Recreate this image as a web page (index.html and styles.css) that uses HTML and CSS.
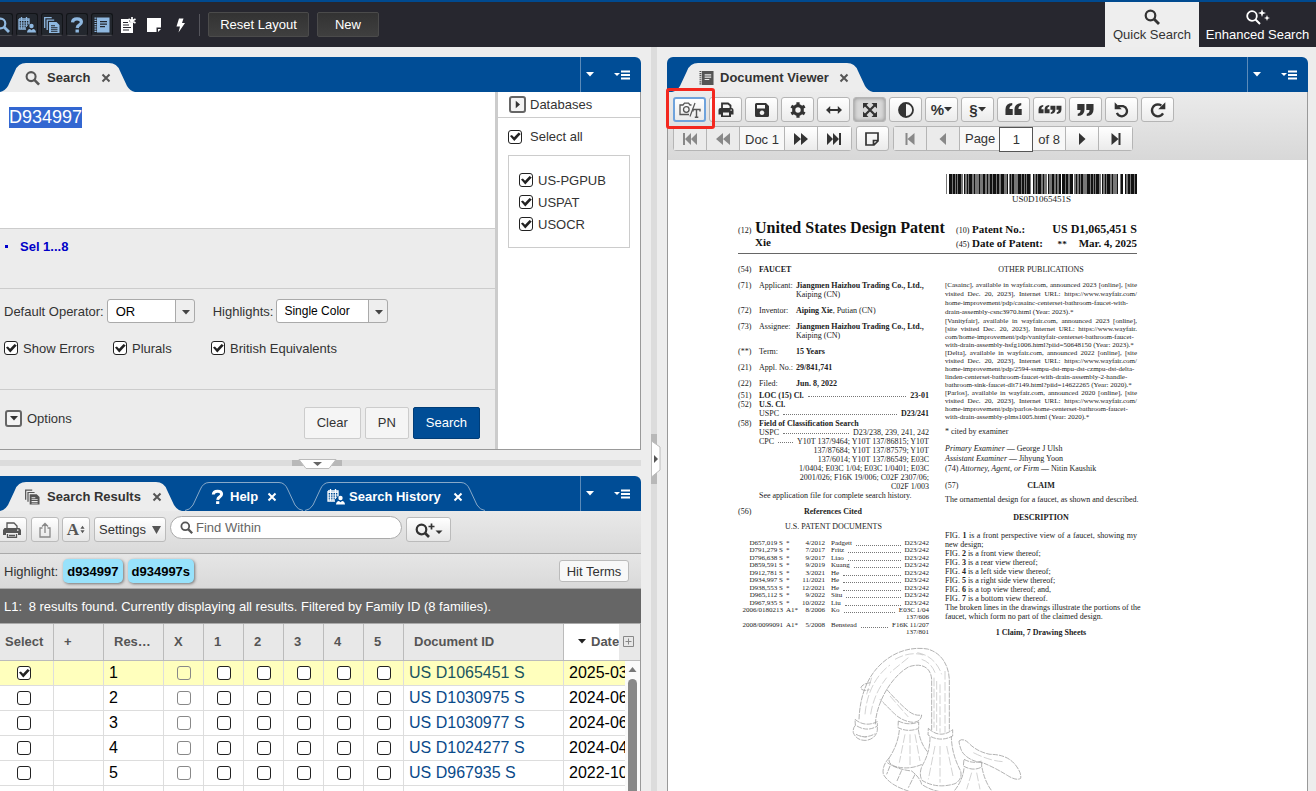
FILE: index.html
```html
<!DOCTYPE html>
<html lang="en">
<head>
<meta charset="utf-8">
<title>Patent Search</title>
<link rel="stylesheet" href="styles.css">
</head>
<body>
<svg class="defs" aria-hidden="true">
  <symbol id="i-search" viewBox="0 0 16 16"><circle cx="6.5" cy="6.5" r="4.8" fill="none" stroke="currentColor" stroke-width="2.2"/><path d="M10 10l5 5" stroke="currentColor" stroke-width="2.8"/></symbol>
  <symbol id="i-history" viewBox="0 0 18 16"><path d="M1 2h10v5.500M1 2v10h7M3.500 0v3M8.500 0v3" fill="none" stroke="currentColor" stroke-width="1.300"/><path d="M1 3.500h10M1 6h10M1 8.200h9M1 10.200h7M3.500 3v9M6 3v9M8.500 3v7" stroke="currentColor" stroke-width=".9"/><circle cx="13.500" cy="9" r="2.200" fill="currentColor"/><path d="M9 15.500q.3-3.500 3-3.500l1.500 1.200 1.500-1.200q2.700 0 3 3.500z" fill="currentColor"/></symbol>
  <symbol id="i-docs" viewBox="0 0 16 16"><path d="M.7 11V.7h7M3.200 13V3.200h7" fill="none" stroke="currentColor" stroke-width="1.300"/><path fill-rule="evenodd" d="M5 5h7.500L15.500 8v8H5zM7 8.200h4v1H7zM7 10.300h6.500v1H7zM7 12.300h6.500v1H7zM7 14.200h6.500v.8H7z" fill="currentColor"/></symbol>
  <symbol id="i-help" viewBox="0 0 16 16"><path d="M3.500 5.300Q3.700 1.800 8 1.800t4.400 3.100q0 1.800-2 2.900T8.200 11" fill="none" stroke="currentColor" stroke-width="3.200"/><path d="M6.500 12.500h3.400v3H6.500z" fill="currentColor"/></symbol>
  <symbol id="i-book" viewBox="0 0 16 16"><path d="M1.500.5v15" stroke="currentColor" stroke-width="2" stroke-dasharray="1.200 1"/><path fill-rule="evenodd" d="M3 .5h12.500v15H3zM6 4h7v1.200H6zM6 6.500h7v1.200H6zM6 9h5v1.200H6z" fill="currentColor"/></symbol>
  <symbol id="i-newnote" viewBox="0 0 16 16"><path fill-rule="evenodd" d="M1 2h8v4h4v10H1zM3 5h5v1H3zM3 7.500h6v1H3zM3 10h8v1H3zM3 12.500h6v1H3z" fill="currentColor"/><path d="M12 0v8M8.500 2l7 4M15.500 2l-7 4" stroke="currentColor" stroke-width="1.700"/></symbol>
  <symbol id="i-note" viewBox="0 0 16 16"><path d="M1 1h14v9.500h-4.500V15H1zM12 12h3l-3 3z" fill="currentColor"/></symbol>
  <symbol id="i-bolt" viewBox="0 0 16 16"><path d="M7 1.500h4.500L10 6h3L6.500 15.500 8 9.500H4.500z" fill="currentColor"/></symbol>
  <symbol id="i-enhanced" viewBox="0 0 26 16"><circle cx="7" cy="7" r="4.800" fill="none" stroke="currentColor" stroke-width="1.800"/><path d="M10.500 10.500l4.500 4.500" stroke="currentColor" stroke-width="2"/><path d="M17 0l1 3 3 1-3 1-1 3-1-3-3-1 3-1zM22 6l.8 2.200L25 9l-2.200.8L22 12l-.8-2.200L19 9l2.200-.8z" fill="currentColor"/></symbol>
  <symbol id="i-x" viewBox="0 0 10 10"><path d="M1.500 1.500l7 7M8.500 1.500l-7 7" stroke="currentColor" stroke-width="2"/></symbol>
  <symbol id="i-caret" viewBox="0 0 8 5"><path d="M0 0h8L4 4.500z" fill="currentColor"/></symbol>
  <symbol id="i-menu" viewBox="0 0 16 10"><path d="M0 3h6L3 6z" fill="currentColor"/><path d="M7 1.500h9M7 5h9M7 8.500h9" stroke="currentColor" stroke-width="2"/></symbol>
  <symbol id="i-ocr" viewBox="0 0 22 16"><path d="M10 12.500H1V3h3l1.500-1.800h4L11 3h1.500" fill="none" stroke="currentColor" stroke-width="1.300"/><circle cx="7.300" cy="7.500" r="2.800" fill="none" stroke="currentColor" stroke-width="1.300"/><path d="M16 1l-5 13.500" stroke="currentColor" stroke-width="1.200"/><path d="M14 9.500V7.500h7v2M17.500 7.500v7.500M15.800 15.200h3.500" fill="none" stroke="currentColor" stroke-width="1.400"/></symbol>
  <symbol id="i-print" viewBox="0 0 16 16"><path d="M4 6V1.500h6l2.500 2V6" fill="none" stroke="currentColor" stroke-width="1.800"/><path fill-rule="evenodd" d="M2.500 6h11q2 0 2 2v4.500h-2.500v2.500H3v-2.500H.5V8q0-2 2-2zM5 10.500v3h6v-3zM12.500 7.500v1.300h1.300V7.500z" fill="currentColor"/></symbol>
  <symbol id="i-save" viewBox="0 0 16 16"><path fill-rule="evenodd" d="M2.500 1H12l3 3v9.500q0 1.500-1.500 1.500h-11Q1 15 1 13.500v-11Q1 1 2.500 1zM3 3v3.500h8V3zM8 8.500a2.300 2.300 0 1 0 .01 0z" fill="currentColor"/></symbol>
  <symbol id="i-gear" viewBox="0 0 16 16"><circle cx="8" cy="8" r="4.300" fill="none" stroke="currentColor" stroke-width="3.200"/><path d="M8 .3v3M8 12.700v3M1.300 4.200l2.600 1.500M12.100 10.300l2.600 1.500M1.300 11.800l2.600-1.500M12.100 5.700l2.600-1.500" stroke="currentColor" stroke-width="3.200"/></symbol>
  <symbol id="i-width" viewBox="0 0 16 16"><path d="M0 8l4.200-4v3h7.600V4L16 8l-4.200 4V9H4.200v3z" fill="currentColor"/></symbol>
  <symbol id="i-expand" viewBox="0 0 16 16"><path d="M3 3l10 10M13 3L3 13" stroke="currentColor" stroke-width="2.200"/><path d="M1 1h5.500L1 6.500zM15 1v5.500L9.500 1zM1 15V9.500L6.500 15zM15 15H9.500L15 9.500z" fill="currentColor"/></symbol>
  <symbol id="i-contrast" viewBox="0 0 16 16"><circle cx="8" cy="8" r="7" fill="none" stroke="currentColor" stroke-width="1.800"/><path d="M8 1a7 7 0 0 0 0 14z" fill="currentColor"/></symbol>
  <symbol id="i-quote" viewBox="0 0 8 14"><path d="M7.500 0v2.500Q4.500 3 4.500 6.500h3.500V13H.2V7Q.2.500 7.500 0z" fill="currentColor"/></symbol>
  <symbol id="i-undo" viewBox="0 0 16 16"><path d="M4.500 4.500H9a4.600 4.600 0 1 1-5.500 6" fill="none" stroke="currentColor" stroke-width="2"/><path d="M1.500 1v6.300h6.300z" fill="currentColor"/></symbol>
  <symbol id="i-redo" viewBox="0 0 16 16"><path d="M11 4Q9.500 3 7.800 3a5.300 5.300 0 1 0 4.700 8" fill="none" stroke="currentColor" stroke-width="2"/><path d="M14.500 1v6.300H8.200z" fill="currentColor"/></symbol>
  <symbol id="i-first" viewBox="0 0 16 14"><path d="M1 1h2v12H1zM9 1v12L3 7zM15 1v12L9 7z" fill="currentColor"/></symbol>
  <symbol id="i-prev" viewBox="0 0 16 14"><path d="M8 1v12L1 7zM15 1v12L8 7z" fill="currentColor"/></symbol>
  <symbol id="i-p-first" viewBox="0 0 16 14"><path d="M3.500 1h2v12h-2zM12.500 1v12l-7-6z" fill="currentColor"/></symbol>
  <symbol id="i-p-prev" viewBox="0 0 16 14"><path d="M11 1v12L4.500 7z" fill="currentColor"/></symbol>
  <symbol id="i-sticky" viewBox="0 0 16 16"><path d="M2 2h12v8l-4 4H2zM14 9.500H9.500V14" fill="none" stroke="currentColor" stroke-width="1.700"/></symbol>
  <symbol id="i-printer" viewBox="0 0 18 16"><path fill-rule="evenodd" d="M1.500 6h15L18 8v5h-3v-2H3v2H0V8zM14 7.500v1.200h1.500V7.500z" fill="currentColor"/><path d="M4 6V1h7l3 3v2M4.500 12v3.300h9V12M6 13.500h6" fill="none" stroke="currentColor" stroke-width="1.300"/></symbol>
  <symbol id="i-share" viewBox="0 0 16 16"><path d="M5.500 6H3v9h10V6h-2.500M8 11V2M5 4.500l3-3 3 3" fill="none" stroke="currentColor" stroke-width="1.300"/></symbol>
  <symbol id="i-updown" viewBox="0 0 6 10"><path d="M3 .5L5.500 4h-5zM3 9.500L.5 6h5z" fill="currentColor"/></symbol>
  <symbol id="i-searchplus" viewBox="0 0 28 16"><circle cx="7" cy="7.500" r="4.800" fill="none" stroke="currentColor" stroke-width="2.200"/><path d="M10.500 11l4 4" stroke="currentColor" stroke-width="2.600"/><path d="M17 1.500v6M14 4.500h6" stroke="currentColor" stroke-width="1.700"/><path d="M21 8.500h7L24.500 12z" fill="currentColor"/></symbol>
</svg>

<header class="top">
  <nav class="launch" aria-label="Gadgets">
    <button class="gadget" aria-label="Search"><svg><use href="#i-search"/></svg></button>
    <button class="gadget" aria-label="Search history"><svg class="wide"><use href="#i-history"/></svg></button>
    <button class="gadget" aria-label="Search results"><svg><use href="#i-docs"/></svg></button>
    <button class="gadget" aria-label="Help"><svg><use href="#i-help"/></svg></button>
    <button class="gadget" aria-label="Document viewer"><svg><use href="#i-book"/></svg></button>
    <button class="gadget plain" aria-label="New note"><svg><use href="#i-newnote"/></svg></button>
    <button class="gadget plain" aria-label="Note"><svg><use href="#i-note"/></svg></button>
    <button class="gadget plain" aria-label="Quick action"><svg><use href="#i-bolt"/></svg></button>
    <span class="rule"></span>
    <button class="dark-btn">Reset Layout</button>
    <button class="dark-btn new">New</button>
  </nav>
  <nav class="modes" aria-label="Search mode">
    <a class="mode quick" href="#"><svg><use href="#i-search"/></svg>Quick Search</a>
    <a class="mode" href="#"><svg class="wide"><use href="#i-enhanced"/></svg>Enhanced Search</a>
  </nav>
</header>

<main class="work">
  <div class="left">
    <section class="panel">
      <div class="tabs">
        <div class="tab t-search"><svg class="shape" viewBox="0 0 135 29"><path d="M0 29Q5 28 8 23L15 8Q18 0 26 0H109Q117 0 120 8L127 23Q130 28 135 29z"/></svg><svg class="ico"><use href="#i-search"/></svg><span>Search</span><button aria-label="Close Search"><svg><use href="#i-x"/></svg></button></div>
        <div class="tab-end"><button aria-label="Tabs"><svg class="caret"><use href="#i-caret"/></svg></button><button aria-label="Menu"><svg class="menu"><use href="#i-menu"/></svg></button></div>
      </div>
      <div class="search-body">
        <form class="query">
          <textarea id="q" aria-label="Query" spellcheck="false">D934997</textarea>
          <div class="sel"><a href="#">Sel 1...8</a></div>
          <div class="opts">
            <div class="opt-row">
              <label for="op">Default Operator:</label>
              <span class="drop"><select id="op"><option>OR</option></select><svg><use href="#i-caret"/></svg></span>
              <label for="hl" class="hl-label">Highlights:</label>
              <span class="drop color"><select id="hl"><option>Single Color</option></select><svg><use href="#i-caret"/></svg></span>
            </div>
            <div class="check-row">
              <label class="c1"><input type="checkbox" checked>Show Errors</label>
              <label class="c2"><input type="checkbox" checked>Plurals</label>
              <label><input type="checkbox" checked>British Equivalents</label>
            </div>
          </div>
          <div class="actions">
            <button type="button" class="expander"><i class="box"><svg><use href="#i-caret"/></svg></i>Options</button>
            <button type="button" class="act">Clear</button>
            <button type="button" class="act">PN</button>
            <button type="button" class="act primary">Search</button>
          </div>
        </form>
        <aside class="dbs">
          <button type="button" class="db-head"><i class="box right"><svg><use href="#i-caret"/></svg></i>Databases</button>
          <label class="all"><input type="checkbox" checked>Select all</label>
          <div class="db-list">
            <label><input type="checkbox" checked>US-PGPUB</label>
            <label><input type="checkbox" checked>USPAT</label>
            <label><input type="checkbox" checked>USOCR</label>
          </div>
        </aside>
      </div>
    </section>

    <div class="hsplit"><svg viewBox="0 0 50 10"><path d="M0 1h50v6H0z" fill="#b8b8b8"/><path d="M7 .5h37l-7 9H14z" fill="#fff" stroke="#bbb"/><path d="M21 3h9l-4.500 4z" fill="#666"/></svg></div>

    <section class="panel results">
      <div class="tabs">
        <div class="tab t-results"><svg class="shape" viewBox="0 0 182 29"><path d="M0 29Q5 28 8 23L15 8Q18 0 26 0H156Q164 0 167 8L174 23Q177 28 182 29z"/></svg><svg class="ico"><use href="#i-docs"/></svg><span>Search Results</span><button aria-label="Close Search Results"><svg><use href="#i-x"/></svg></button></div>
        <div class="tab off t-help"><svg class="shape" viewBox="0 0 118 29"><path d="M0 28.500Q5 28 8 23L15 8Q18 .5 24 .5H94Q100 .5 103 8L110 23Q113 28 118 28.500"/></svg><svg class="ico"><use href="#i-help"/></svg><span>Help</span><button aria-label="Close Help"><svg><use href="#i-x"/></svg></button></div>
        <div class="tab off t-history"><svg class="shape" viewBox="0 0 180 29"><path d="M0 28.500Q5 28 8 23L15 8Q18 .5 24 .5H156Q162 .5 165 8L172 23Q175 28 180 28.500"/></svg><svg class="ico wide"><use href="#i-history"/></svg><span>Search History</span><button aria-label="Close Search History"><svg><use href="#i-x"/></svg></button></div>
        <div class="tab-end"><button aria-label="Tabs"><svg class="caret"><use href="#i-caret"/></svg></button><button aria-label="Menu"><svg class="menu"><use href="#i-menu"/></svg></button></div>
      </div>
      <div class="r-tools">
        <button class="rt" aria-label="Print"><svg class="wide"><use href="#i-printer"/></svg></button>
        <button class="rt" aria-label="Export"><svg class="faded"><use href="#i-share"/></svg></button>
        <button class="rt font" aria-label="Font size"><b>A</b><svg><use href="#i-updown"/></svg></button>
        <button class="rt settings">Settings <svg viewBox="0 0 9 8"><path d="M0 0h9L4.500 8z" fill="#555"/></svg></button>
        <label class="find"><svg><use href="#i-search"/></svg><input type="search" placeholder="Find Within" aria-label="Find Within"></label>
        <button class="rt zoom" aria-label="Search options"><svg><use href="#i-searchplus"/></svg></button>
      </div>
      <div class="r-hl"><span>Highlight:</span><button class="chip">d934997</button><button class="chip">d934997s</button><button class="hit">Hit Terms</button></div>
      <div class="r-info"><span>L1:</span> 8 results found. Currently displaying all results. Filtered by Family ID (8 families).</div>
      <div class="grid">
        <table>
          <colgroup><col class="w54"><col class="w50"><col class="w60"><col class="w40"><col class="w40"><col class="w40"><col class="w40"><col class="w40"><col class="w40"><col class="w160"><col></colgroup>
          <thead><tr><th class="first">Select</th><th>+</th><th>Res…</th><th>X</th><th>1</th><th>2</th><th>3</th><th>4</th><th>5</th><th>Document ID</th><th class="date"><svg><use href="#i-caret"/></svg>Date</th></tr></thead>
          <tbody id="rows"></tbody>
        </table>
        <button class="addcol" aria-label="Add column"><svg viewBox="0 0 12 12"><path d="M.5.500h10v10H.5zM5.500 2.500v6M2.500 5.500h6" fill="none" stroke="#888"/></svg></button>
        <div class="scroll"><svg viewBox="0 0 8 5"><path d="M0 5h8L4 0z" fill="#777"/></svg><i></i></div>
      </div>
    </section>
  </div>

  <div class="vsplit"><svg viewBox="0 0 10 50"><path d="M0 0h6v50H0z" fill="#b8b8b8"/><path d="M.5 7l8.500 6v23L.5 43z" fill="#fff" stroke="#bbb"/><path d="M3 21v8l4-4z" fill="#555"/></svg></div>

  <section class="panel viewer">
    <div class="tabs">
      <div class="tab t-doc"><svg class="shape" viewBox="0 0 201 29"><path d="M0 29Q5 28 8 23L15 8Q18 0 26 0H175Q183 0 186 8L193 23Q196 28 201 29z"/></svg><svg class="ico"><use href="#i-book"/></svg><span>Document Viewer</span><button aria-label="Close Document Viewer"><svg><use href="#i-x"/></svg></button></div>
      <div class="tab-end"><button aria-label="Tabs"><svg class="caret"><use href="#i-caret"/></svg></button><button aria-label="Menu"><svg class="menu"><use href="#i-menu"/></svg></button></div>
    </div>
    <div class="v-tools">
      <div class="bar">
        <button class="vt focus" aria-label="Image or text"><svg class="ocr"><use href="#i-ocr"/></svg><i class="mark"></i></button>
        <button class="vt" aria-label="Print"><svg><use href="#i-print"/></svg></button>
        <button class="vt" aria-label="Save"><svg><use href="#i-save"/></svg></button>
        <button class="vt" aria-label="Settings"><svg><use href="#i-gear"/></svg></button>
        <button class="vt" aria-label="Fit width"><svg><use href="#i-width"/></svg></button>
        <button class="vt pressed" aria-label="Fit page"><svg><use href="#i-expand"/></svg></button>
        <button class="vt" aria-label="Contrast"><svg><use href="#i-contrast"/></svg></button>
        <button class="vt sym">%<svg><use href="#i-caret"/></svg></button>
        <button class="vt sym">§<svg><use href="#i-caret"/></svg></button>
        <button class="vt q" aria-label="Quote start"><svg><use href="#i-quote"/></svg><svg><use href="#i-quote"/></svg></button>
        <button class="vt q small" aria-label="Quote"><svg><use href="#i-quote"/></svg><svg><use href="#i-quote"/></svg><svg class="turn"><use href="#i-quote"/></svg><svg class="turn"><use href="#i-quote"/></svg></button>
        <button class="vt q" aria-label="Quote end"><svg class="turn"><use href="#i-quote"/></svg><svg class="turn"><use href="#i-quote"/></svg></button>
        <button class="vt spin" aria-label="Rotate left"><svg><use href="#i-undo"/></svg></button>
        <button class="vt spin" aria-label="Rotate right"><svg><use href="#i-redo"/></svg></button>
      </div>
      <div class="bar nav">
        <div class="group"><button class="vt dim" aria-label="First document"><svg><use href="#i-first"/></svg></button><button class="vt dim" aria-label="Previous document"><svg><use href="#i-prev"/></svg></button><span>Doc 1</span><button class="vt" aria-label="Next document"><svg class="turn"><use href="#i-prev"/></svg></button><button class="vt" aria-label="Last document"><svg class="turn"><use href="#i-first"/></svg></button></div>
        <button class="vt lone" aria-label="Note"><svg><use href="#i-sticky"/></svg></button>
        <div class="group"><button class="vt dim" aria-label="First page"><svg><use href="#i-p-first"/></svg></button><button class="vt dim" aria-label="Previous page"><svg><use href="#i-p-prev"/></svg></button><label class="page-no" for="pg">Page</label><input id="pg" type="text" value="1"><span class="of">of 8</span><button class="vt" aria-label="Next page"><svg class="turn"><use href="#i-p-prev"/></svg></button><button class="vt" aria-label="Last page"><svg class="turn"><use href="#i-p-first"/></svg></button></div>
      </div>
    </div>
    <div class="doc">
      <article class="sheet">
        <div class="barcode">
          <svg viewBox="0 0 191 20"><path d="M0 10H191" stroke="#777" stroke-width="20" stroke-dasharray="1 2 14 1 19 2 5 2 15 2 11 1 10 2 14 2 12 1 10 2 13 2 12 1 16 2 3 2 13 9"/><path d="M3 10H191" stroke="#111" stroke-width="20" stroke-dasharray="3 1 2 1 1 1 3 3 1 2 1 1 3 2 1 4 1 3 2 2 1 2 2 1 3 1 2 2 3 3 1 2 1 1 2 4"/></svg>
          <div>US0D1065451S</div>
        </div>
        <header class="head">
          <span class="n">(12)</span>
          <div class="title"><h1>United States Design Patent</h1><b>Xie</b></div>
          <dl><dt><span class="n">(10)</span> <b>Patent No.:</b></dt><dd class="no">US D1,065,451 S</dd><dt><span class="n">(45)</span> <b>Date of Patent:</b></dt><dd><small>**</small>Mar. 4, 2025</dd></dl>
        </header>
        <div class="cols">
          <div class="col-l">
            <div class="f"><span>(54)</span><b class="two">FAUCET</b></div>
            <div class="f"><span>(71)</span><span>Applicant:</span><span><b>Jiangmen Haizhou Trading Co., Ltd.,</b><br>Kaiping (CN)</span></div>
            <div class="f"><span>(72)</span><span>Inventor:</span><span><b>Aiping Xie</b>, Putian (CN)</span></div>
            <div class="f"><span>(73)</span><span>Assignee:</span><span><b>Jiangmen Haizhou Trading Co., Ltd.,</b><br>Kaiping (CN)</span></div>
            <div class="f"><span>(**)</span><span>Term:</span><b>15 Years</b></div>
            <div class="f"><span>(21)</span><span>Appl. No.:</span><b>29/841,741</b></div>
            <div class="f tight"><span>(22)</span><span>Filed:</span><b>Jun. 8, 2022</b></div>
            <div class="f none"><span>(51)</span><span class="two lead"><b>LOC (15) Cl.</b><i></i><b>23-01</b></span></div>
            <div class="f none"><span>(52)</span><div class="two"><b>U.S. Cl.</b><div class="lead">USPC<i></i><b>D23/241</b></div></div></div>
            <div class="f none cls"><span>(58)</span><div class="two"><b>Field of Classification Search</b><div class="lead">USPC<i></i>D23/238, 239, 241, 242</div><div class="lead">CPC<i></i>Y10T 137/9464; Y10T 137/86815; Y10T</div><div class="r">137/87684; Y10T 137/87579; Y10T<br>137/6014; Y10T 137/86549; E03C<br>1/0404; E03C 1/04; E03C 1/0401; E03C<br>2001/026; F16K 19/006; C02F 2307/06;<br>C02F 1/003</div>See application file for complete search history.</div></div>
            <div class="f refs"><span>(56)</span><b class="two mid">References Cited</b></div>
            <div class="usp">U.S. PATENT DOCUMENTS</div>
            <table class="cites"><tbody id="cites"></tbody></table>
          </div>
          <div class="col-r">
            <div class="c">OTHER PUBLICATIONS</div>
            <div class="pubs">
              <p class="loose"><span>[Casainc], available in wayfair.com, announced 2023 [online], [site</span><span>visited Dec. 20, 2023], Internet URL: https://www.wayfair.com/</span><span>home-improvement/pdp/casainc-centerset-bathroom-faucet-with-</span><span class="end">drain-assembly-csnc3970.html (Year: 2023).*</span></p>
              <p><span>[Vanityfair], available in wayfair.com, announced 2023 [online],</span><span>[site visited Dec. 20, 2023], Internet URL: https://www.wayfair.</span><span>com/home-improvement/pdp/vanityfair-centerset-bathroom-faucet-</span><span class="end">with-drain-assembly-hsfg1006.html?piid=50648150 (Year: 2023).*</span></p>
              <p><span>[Delta], available in wayfair.com, announced 2022 [online], [site</span><span>visited Dec. 20, 2023], Internet URL: https://www.wayfair.com/</span><span>home-improvement/pdp/2594-ssmpu-dst-mpu-dst-czmpu-dst-delta-</span><span>linden-centerset-bathroom-faucet-with-drain-assembly-2-handle-</span><span class="end">bathroom-sink-faucet-dlt7149.html?piid=14622265 (Year: 2020).*</span></p>
              <p><span>[Parlos], available in wayfair.com, announced 2020 [online], [site</span><span>visited Dec. 20, 2023], Internet URL: https://www.wayfair.com/</span><span>home-improvement/pdp/parlos-home-centerset-bathroom-faucet-</span><span class="end">with-drain-assembly-plms1005.html (Year: 2020).*</span></p>
            </div>
            <div class="cited">* cited by examiner</div>
            <div class="people"><em>Primary Examiner</em> — George J Ulsh<br><em>Assistant Examiner</em> — Jihyung Yoon<br>(74) <em>Attorney, Agent, or Firm</em> — Nitin Kaushik</div>
            <div class="claim"><span>(57)</span><b>CLAIM</b></div>
            <div class="pubs body orn"><p><span>The ornamental design for a faucet, as shown and described.</span></p></div>
            <div class="c desc"><b>DESCRIPTION</b></div>
            <div class="pubs body"><p><span>FIG. <b>1</b> is a front perspective view of a faucet, showing my</span><span class="end">new design;</span><span class="end">FIG. <b>2</b> is a front view thereof;</span><span class="end">FIG. <b>3</b> is a rear view thereof;</span><span class="end">FIG. <b>4</b> is a left side view thereof;</span><span class="end">FIG. <b>5</b> is a right side view thereof;</span><span class="end">FIG. <b>6</b> is a top view thereof; and,</span><span class="end">FIG. <b>7</b> is a bottom view thereof.</span><span>The broken lines in the drawings illustrate the portions of the</span><span class="end">faucet, which form no part of the claimed design.</span></p></div>
            <div class="c sheets"><b>1 Claim, 7 Drawing Sheets</b></div>
          </div>
        </div>
        <svg class="faucet" viewBox="0 45 600 438">
          <g fill="none" stroke="#a2a2a2" stroke-width="2.500" stroke-dasharray="16 3">
            <path d="M57 265C60 190 85 125 140 85C180 55 225 48 262 54C305 65 328 105 328 150V300M106 280C108 220 150 140 205 108C240 95 272 105 275 145V300"/>
            <path d="M45 265Q75 290 112 272V285Q80 305 46 282zM46 283Q38 292 40 305Q50 330 80 328Q108 322 112 298V284M48 310Q75 325 106 308"/>
            <path d="M92 155Q65 158 62 172Q70 182 88 176M140 175Q175 215 205 240Q225 256 245 252Q243 272 220 274Q190 272 165 250Q140 225 120 205"/>
            <path d="M175 270Q205 285 236 273V292Q205 305 174 290zM178 297Q174 340 148 380Q142 398 165 406Q205 418 246 400M235 295Q240 335 262 362"/>
            <path d="M265 292Q300 325 338 296V315Q300 335 264 312zM270 318Q270 365 246 405Q236 430 246 448Q290 475 345 458Q368 445 362 420Q335 370 334 316"/>
            <path d="M357 330Q368 320 385 335Q410 362 450 370Q500 370 525 400Q545 425 542 442Q530 450 505 435Q465 410 430 396Q385 390 366 362Q358 345 357 330M372 385Q400 400 425 390V408Q400 422 370 405zM372 412Q368 450 340 483M426 410Q435 455 458 483"/>
            <path d="M148 380Q125 405 130 430Q150 465 215 483M142 395Q170 415 215 420Q240 440 245 460Q290 490 350 483M150 405L140 430M185 418L170 452M225 430L205 470"/>
          </g>
          <g fill="none" stroke="#bdbdbd" stroke-width="2" stroke-dasharray="26 7">
            <path d="M75 250C80 190 105 135 150 102M92 250C98 210 115 170 140 140M165 85Q210 60 250 72M290 150V300M300 160V305M315 120V305M232 65Q285 75 305 130M285 345L265 445M300 345V455M320 345L340 440M195 310L178 395M210 310V405M225 310L240 390M150 195L205 258M60 315L80 320M400 365Q450 390 490 392M395 425L380 475M410 425L420 475M95 140L80 190M282 140V290M245 85Q275 95 287 130M205 80L150 125"/>
          </g>
        </svg>
      </article>
    </div>
  </section>
</main>
<script src="app.js"></script>
</body>
</html>
```
FILE: styles.css
```css
* { box-sizing: border-box; }
body { margin: 0; height: 100vh; display: flex; flex-direction: column; overflow: hidden; background: #ededed; color: #333; font: 13px "Liberation Sans", Arial, sans-serif; }
button, input, select, textarea { font: inherit; color: inherit; margin: 0; }
button { padding: 0; border: 0; background: none; }
a { text-decoration: none; }
svg { display: block; flex: none; width: 16px; height: 16px; }
.defs { position: absolute; width: 0; height: 0; }

/* Header */
.top { flex: none; display: flex; justify-content: space-between; height: 47px; border-top: 2px solid #004a90; background: #27272f; color: #fff; overflow: hidden; }
.launch { display: flex; align-items: center; gap: 3px; margin-left: -9px; padding-bottom: 0; }
.gadget { display: flex; align-items: center; justify-content: center; width: 22px; height: 23px; border: 1px solid #121418; border-bottom-color: #4a4a50; border-radius: 3px; background: #23272e; color: #8fb8e0; }
.gadget.plain { width: 23px; border-color: transparent; background: none; color: #fff; }
.gadget .wide { width: 18px; }
.rule { width: 1px; height: 22px; margin: 0 5px; background: #55555c; }
.dark-btn { width: 101px; height: 25px; border: 1px solid #4b4b4b; border-radius: 2px; background: linear-gradient(#333, #3f3f3f); color: #fff; }
.dark-btn.new { width: 62px; margin-left: 5px; }
.modes { display: flex; }
.mode { display: flex; flex-direction: column; align-items: center; gap: 2px; width: 117px; padding-top: 7px; color: #fff; line-height: 16px; white-space: nowrap; }
.mode .wide { width: 26px; }
.mode.quick { width: 94px; background: #eee; color: #333; }

/* Work area */
.work { flex: 1; min-height: 0; display: grid; grid-template-columns: minmax(0, 1fr) 26px minmax(0, 1fr); padding-right: 8px; }
.left { display: flex; flex-direction: column; min-height: 0; padding-top: 10px; }
.panel { display: flex; flex-direction: column; }
.results { flex: 1; min-height: 0; }
.viewer { margin-top: 10px; min-height: 0; }
.tabs { flex: none; display: flex; align-items: flex-end; height: 35px; border-radius: 0 6px 0 0; background: #004d96; }
.viewer .tabs { border-radius: 6px 6px 0 0; }
.tab { position: relative; display: flex; align-items: center; height: 29px; padding: 0 25px; gap: 7px; color: #333; font-weight: bold; white-space: nowrap; }
.tab > * { position: relative; }
.tab .shape { position: absolute; left: 0; top: 0; width: 100%; height: 29px; fill: #ededed; }
.tab .ico { width: 15px; color: #555; }
.tab button { width: 10px; height: 10px; margin-left: 4px; color: #555; }
.tab button svg { width: 10px; height: 10px; }
.tab.off { color: #fff; }
.tab.off .shape { fill: none; stroke: #88a9c9; }
.tab.off .ico, .tab.off button { color: #fff; }
.tab .ico.wide { width: 18px; }
.t-search { width: 135px; }
.t-results { width: 182px; }
.t-help { width: 118px; margin-left: 3px; gap: 5px; }
.t-history { width: 180px; margin-left: 2px; padding-left: 22px; gap: 4px; }
.t-history button { margin-left: 8px; }
.t-doc { width: 201px; margin-left: 5px; padding-left: 27px; gap: 6px; }
.tab-end { display: flex; align-items: center; align-self: stretch; margin-left: auto; border-left: 1px solid #5c8bb9; color: #fff; }
.tab-end button { display: flex; width: 33px; justify-content: flex-start; padding-left: 5px; }
.tab-end button + button { width: 27px; padding-left: 0; }
.caret { width: 8px; height: 5px; }
.menu { width: 16px; height: 10px; }

/* Check boxes */
input[type="checkbox"] { appearance: none; flex: none; display: block; width: 14px; height: 14px; border: 1px solid #222; border-radius: 3px; background: #fff; }
input[type="checkbox"]:checked::after { content: ""; display: block; width: 12px; height: 12px; background: #222; clip-path: polygon(8% 46%, 24% 38%, 42% 56%, 80% 16%, 98% 30%, 44% 88%); }
input[type="checkbox"]:disabled { border-color: #888; background: transparent; }
label { display: flex; align-items: center; gap: 5px; }

/* Search panel */
.search-body { display: flex; border: solid #999; border-width: 0 1px 1px 0; background: #fff; }
.query { flex: 1; min-width: 0; border-right: 3px solid #ccc; background: #ececec; }
.query textarea { display: block; width: 100%; height: 136px; padding: 15px 9px; border: 0; outline: 0; resize: none; background: #fff; color: #333; font-size: 18px; line-height: 21px; }
.query textarea::selection { background: #3367d1; color: #fff; }
.sel { height: 60px; padding: 10px 20px; border-top: 1px solid #ccc; line-height: 16px; background: linear-gradient(#00c, #00c) 5px 16px / 3px 3px no-repeat; }
.sel a { color: #0000c8; font-weight: bold; }
.opts { height: 101px; padding: 10px 4px 0; border-top: 1px solid #ccc; }
.opt-row { display: flex; align-items: center; height: 24px; white-space: nowrap; }
.drop { position: relative; width: 88px; height: 24px; margin-left: 3px; }
.drop.color { width: 112px; }
.drop select { appearance: none; width: 100%; height: 24px; padding: 0 24px 0 8px; border: 1px solid #aaa; border-radius: 3px; background: linear-gradient(to left, #eee 18px, #aaa 18px, #aaa 19px, #fff 19px); color: #000; }
.drop.color select { font-size: 12px; padding-left: 7px; }
.drop svg { position: absolute; right: 5px; top: 11px; width: 8px; height: 5px; color: #444; pointer-events: none; }
.hl-label { margin-left: 18px; }
.check-row { display: flex; align-items: center; height: 20px; margin-top: 15px; }
.c1 { width: 109px; }
.c2 { width: 98px; }
.actions { display: flex; align-items: center; gap: 4px; height: 60px; padding: 6px 15px 0 5px; border-top: 1px solid #ccc; }
.expander { display: flex; align-items: center; gap: 5px; margin: 0 auto 8px 0; }
.box { display: flex; align-items: center; justify-content: center; width: 17px; height: 17px; border: 2px solid #666; border-radius: 3px; background: #f4f4f4; }
.box svg { width: 8px; height: 5px; }
.box.right svg { transform: rotate(-90deg); }
.act { height: 32px; padding: 0 12px; border: 1px solid #ccc; border-radius: 2px; background: #f5f5f5; }
.act.primary { border-color: #003d78; background: #004d96; color: #fff; }
.dbs { width: 142px; }
.db-head { display: flex; align-items: center; gap: 4px; width: 100%; height: 26px; padding-left: 11px; border-bottom: 1px solid #ccc; }
.all { height: 37px; padding-left: 10px; gap: 8px; }
.db-list { margin: 0 10px; height: 93px; padding: 13px 10px; border: 1px solid #ccc; }
.db-list label { height: 22px; }

/* Splitters */
.hsplit { flex: none; height: 26px; padding: 9px 8px 0 0; background: linear-gradient(#dcdcdc, #dcdcdc) 0 10px / 100% 6px no-repeat; }
.hsplit svg { width: 50px; height: 10px; margin: 0 auto; }
.vsplit { display: flex; align-items: center; padding: 0 0 0 10px; background: linear-gradient(#dcdcdc, #dcdcdc) 10px 0 / 6px 100% no-repeat; }
.vsplit svg { width: 10px; height: 50px; margin-top: 80px; }

/* Results */
.r-tools { flex: none; display: flex; align-items: flex-start; gap: 4px; height: 43px; padding-top: 6px; margin-left: -3px; border-bottom: 1px solid #aaa; background: linear-gradient(#e9e9e9, #dadada); }
.rt { display: flex; align-items: center; justify-content: center; gap: 1px; width: 28px; height: 25px; border: 1px solid #bbb; border-radius: 3px; background: linear-gradient(#fff, #e6e6e6); color: #555; }
.rt:first-child { width: 30px; }
.rt .wide { width: 18px; }
.rt .faded { color: #888; }
.rt.font b { font: bold 17px "Liberation Serif", serif; }
.rt.font svg { width: 5px; height: 9px; }
.rt.font { margin-left: -1px; }
.rt.settings { width: 72px; gap: 6px; color: #333; }
.settings svg { width: 9px; height: 8px; }
.find { flex: none; width: 232px; height: 23px; margin-top: -1px; padding: 0 9px; gap: 3px; border: 1px solid #aaa; border-radius: 12px; background: #fff; }
.find svg { width: 13px; height: 13px; color: #555; }
.find input { flex: 1; min-width: 0; padding: 0; border: 0; outline: 0; background: none; }
.find input::placeholder { color: #666; }
.rt.zoom { width: 45px; color: #333; }
.zoom svg { width: 29px; }
.r-hl { flex: none; display: flex; align-items: center; gap: 5px; height: 35px; padding: 0 12px 0 4px; border-bottom: 1px solid #aaa; background: linear-gradient(#e6e6e6, #d9d9d9); }
.chip { height: 24px; padding: 0 4px; border-radius: 5px; background: #98e2fb; box-shadow: 1px 1px 3px #777; color: #000; font-weight: bold; }
.hit { width: 70px; height: 22px; margin-left: auto; border: 1px solid #bbb; border-radius: 3px; background: #f8f8f8; }
.r-info { flex: none; height: 34px; padding-left: 4px; background: #666; color: #fff; line-height: 35px; white-space: nowrap; overflow: hidden; }
.r-info span { margin-right: 3px; }
.grid { position: relative; flex: 1; min-height: 0; overflow: hidden; border-top: 1px solid #aaa; border-right: 1px solid #999; background: #fff; }
.grid table { width: 100%; table-layout: fixed; border-collapse: separate; border-spacing: 0; }
.w54 { width: 54px; } .w50 { width: 50px; } .w60 { width: 60px; } .w40 { width: 40px; } .w160 { width: 160px; }
.grid th { height: 37px; padding: 0 0 2px 10px; border: solid #bbb; border-width: 0 1px 1px 0; background: #e8e8e8; color: #555; text-align: left; white-space: nowrap; overflow: hidden; }
.grid th.first { padding-left: 5px; }
.grid th.date { background: #fff; padding-left: 14px; }
.date svg { display: inline-block; width: 8px; height: 5px; margin: 0 5px 2px 0; color: #222; }
.grid td { height: 25px; padding: 0 5px; border: solid #ddd; border-width: 0 1px 1px 0; color: #000; font-size: 16px; line-height: 24px; white-space: nowrap; overflow: hidden; }
.grid td a { color: #0a4a8a; }
.grid td input { margin: 0 auto; }
.grid td:first-child { padding-right: 10px; }
.grid .picked td { background: #ffffbd; }
.grid .picked a { color: #1b5560; }
.addcol { position: absolute; right: 0; top: 0; width: 21px; height: 36px; padding-left: 4px; background: #e8e8e8; }
.addcol svg { width: 12px; height: 12px; }
.scroll { position: absolute; right: 0; top: 37px; bottom: 0; width: 15px; padding: 6px 3px 0; background: #fafafa; }
.scroll svg { width: 9px; height: 5px; }
.scroll i { display: block; height: 100%; margin-top: 7px; border-radius: 5px 5px 0 0; background: #888; }

/* Viewer tool bars */
.v-tools { flex: none; height: 68px; padding: 5px 5px 0; border: solid #999; border-width: 0 1px; background: linear-gradient(#ebebeb, #d8d8d8); }
.bar { display: flex; gap: 3px; height: 25px; }
.nav { gap: 4px; margin-top: 4px; }
.vt { position: relative; display: flex; align-items: center; justify-content: center; width: 33px; height: 25px; border: 1px solid #b5b5b5; border-radius: 3px; background: linear-gradient(#fff, #ebebeb); color: #333; }
.vt.focus { border: 2px solid #6fa3dc; color: #555; }
.ocr { width: 22px; }
.mark { position: absolute; left: -9px; top: -11px; width: 49px; height: 41px; border: 3px solid #f3281f; border-radius: 3px; z-index: 1; }
.vt.pressed { background: #d8d8d8; box-shadow: inset 0 0 4px #888; }
.vt.dim { color: #888; background: #ebebeb; }
.sym { gap: 0; font-size: 15px; font-weight: bold; }
.sym svg { width: 8px; height: 5px; }
.q { gap: 1px; }
.q svg { width: 8px; height: 13px; }
.q.small { gap: 0; }
.q.small svg { width: 6px; height: 9px; }
.spin svg { width: 18px; height: 18px; }
.turn { transform: rotate(180deg); }
.group { display: flex; border: 1px solid #b5b5b5; border-radius: 3px; background: #f8f8f8; }
.group .vt { height: 23px; border: 0; border-right: 1px solid #b5b5b5; border-radius: 0; }
.group .vt:last-child { border-right: 0; }
.group .vt svg { height: 14px; }
.group span, .page-no { padding: 0 5px; line-height: 25px; border-right: 1px solid #b5b5b5; white-space: nowrap; }
.group .page-no { padding: 0 4px 0 5px; border: 0; }
.group input { width: 34px; height: 25px; padding: 0; border: 1px solid #555; background: #fff; text-align: center; }

/* Patent sheet */
.doc { flex: 1; min-height: 0; overflow: hidden; border: solid #999; border-width: 0 1px; background: #fff; }
.sheet { max-width: 469px; padding: 14px 0 0 70px; color: #222; font: 8px/9px "Liberation Serif", "Times New Roman", serif; }
.barcode { width: 191px; margin-left: auto; text-align: center; font-size: 9px; line-height: 10px; }
.barcode svg { width: 100%; height: 20px; }
.head { display: flex; height: 35px; margin-top: 15px; padding-top: 0; border-bottom: 1px solid #666; color: #111; white-space: nowrap; }
.head .n { width: 17px; padding-top: 7px; font-size: 8px; font-weight: normal; }
.title { flex: 1; font-size: 11px; line-height: 11px; }
.head h1 { margin: 0; font-size: 16px; line-height: 18px; }
.head dl { display: grid; grid-template-columns: 1fr auto; align-content: start; width: 181px; margin: 4px 0 0; font-size: 11px; line-height: 13px; font-weight: bold; }
.head dd { margin: 0; text-align: right; }
.head small { margin-right: 12px; }
.head .no { font-size: 12px; }
.cols { display: grid; grid-template-columns: 191px 192px; justify-content: space-between; margin-top: 11px; }
.f { display: grid; grid-template-columns: 21px 37px 1fr; margin-bottom: 7px; white-space: nowrap; }
.f.tight { margin-bottom: 3px; }
.f.none { margin-bottom: 0; }
.two { grid-column: 2 / 4; }
.f.cls { margin-top: 1px; }
.lead { display: flex; gap: 4px; }
.lead i { flex: 1; height: 6px; border-bottom: 1px dotted #777; }
.r { text-align: right; }
.f.refs { margin: 7px 0 6px; }
.mid { padding-left: 45px; }
.usp { text-align: center; }
.cites { width: 191px; margin-top: 9px; border-spacing: 0; font-size: 7px; line-height: 7px; white-space: nowrap; }
.cites td { padding: 0; }
.cites tr:nth-child(even) td { padding-bottom: 1px; }
.cites td:nth-child(1) { width: 45px; text-align: right; }
.cites td:nth-child(2) { width: 16px; padding-left: 3px; }
.cites td:nth-child(3) { width: 26px; text-align: right; }
.cites td:nth-child(4) { padding-left: 6px; }
.c { text-align: center; }
.pubs { margin-top: 7px; font-size: 7px; line-height: 8px; }
.pubs p { margin: 0; }
.pubs .loose { line-height: 9px; }
.pubs span { display: block; white-space: nowrap; text-align-last: justify; }
.pubs .end { text-align-last: left; }
.cited { margin-top: 6px; }
.people { margin-top: 8px; line-height: 10px; }
.claim { display: grid; grid-template-columns: 1fr auto 1fr; margin-top: 7px; }
.pubs.body { margin-top: 9px; font-size: 8px; line-height: 9px; }
.pubs.orn { margin-top: 5px; }
.desc { margin-top: 9px; }
.sheets { margin-top: 7px; }
.faucet { width: 200px; height: 146px; margin: 9px 0 0 102px; }
```
FILE: app.js
```js
const ids = [
  ["US D1065451 S", "2025-03"],
  ["US D1030975 S", "2024-06"],
  ["US D1030977 S", "2024-06"],
  ["US D1024277 S", "2024-04"],
  ["US D967935 S", "2022-10"],
  ["", ""]
];
document.getElementById("rows").innerHTML = ids.map(([id, date], i) => {
  if (!id) return "<tr>" + "<td></td>".repeat(11) + "</tr>";
  const box = (name, extra) => `<td><input type="checkbox" aria-label="${name}" ${extra || ""}></td>`;
  return `<tr class="${i === 0 ? "picked" : ""}">` + box("Select", i === 0 ? "checked" : "") +
    `<td></td><td>${i + 1}</td>` + box("X", "disabled") +
    [1, 2, 3, 4, 5].map(n => box("Tag " + n)).join("") +
    `<td><a href="#">${id}</a></td><td>${date}</td></tr>`;
}).join("");

const cites = [
  ["D657,019 S", "*", "4/2012", "Padgett", "D23/242"],
  ["D791,279 S", "*", "7/2017", "Fritz", "D23/242"],
  ["D796,638 S", "*", "9/2017", "Liao", "D23/242"],
  ["D859,591 S", "*", "9/2019", "Kuang", "D23/242"],
  ["D912,781 S", "*", "3/2021", "He", "D23/242"],
  ["D934,997 S", "*", "11/2021", "He", "D23/242"],
  ["D938,553 S", "*", "12/2021", "He", "D23/242"],
  ["D965,112 S", "*", "9/2022", "Situ", "D23/242"],
  ["D967,935 S", "*", "10/2022", "Liu", "D23/242"],
  ["2006/0180213", "A1*", "8/2006", "Ko", "E03C 1/04<br>137/606"],
  ["2008/0099091", "A1*", "5/2008", "Benstead", "F16K 11/207<br>137/801"]
];
document.getElementById("cites").innerHTML = cites.map(c =>
  `<tr valign="top"><td>${c[0]}</td><td>${c[1]}</td><td>${c[2]}</td><td><div class="lead">${c[3]}<i></i><span class="r">${c[4]}</span></div></td></tr>`
).join("");

const q = document.getElementById("q");
q.focus();
q.select();
```
